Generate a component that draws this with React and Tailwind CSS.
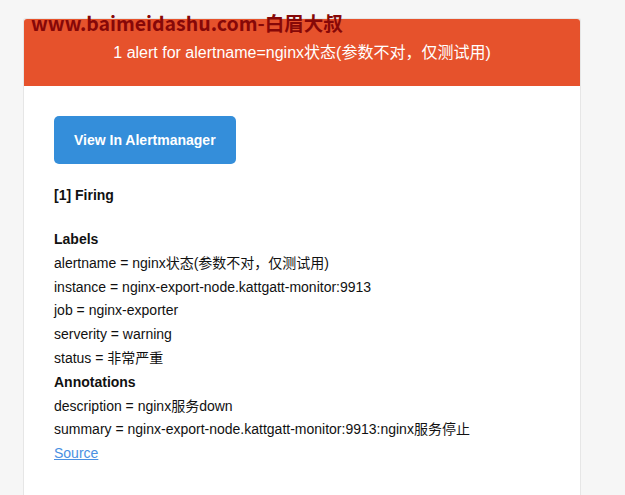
export default function App() {
  const labels = [
    "alertname = nginx状态(参数不对，仅测试用)",
    "instance = nginx-export-node.kattgatt-monitor:9913",
    "job = nginx-exporter",
    "serverity = warning",
    "status = 非常严重",
  ];
  const annotations = [
    "description = nginx服务down",
    "summary = nginx-export-node.kattgatt-monitor:9913:nginx服务停止",
  ];

  return (
    <div className="relative min-h-screen bg-[#f6f6f6] font-['Liberation_Sans','Noto_Sans_CJK_SC',sans-serif] text-[14px] text-[#111]">
      <div className="pt-[18px]">
        <div className="ml-[23px] min-h-[477px] w-[558px] rounded-t-[3px] border border-b-0 border-[#e6e6e6] bg-white">
          <div className="rounded-t-[3px] bg-[#e6522c] py-[20px] text-center text-[16px] leading-[27px] text-white">
            1 alert for alertname=nginx状态(参数不对，仅测试用)
          </div>
          <div className="px-[30px] pt-[30px] pb-[28px]">
            <a className="inline-block rounded-[5px] bg-[#348eda] px-[20px] py-[10px] text-[14px] font-bold leading-[28px] text-white">
              View In Alertmanager
            </a>
            <div className="mt-[19px] font-bold leading-[24px]">[1] Firing</div>
            <div className="mt-[21px] leading-[23.8px]">
              <div className="font-bold">Labels</div>
              {labels.map((l) => (
                <div key={l}>{l}</div>
              ))}
              <div className="font-bold">Annotations</div>
              {annotations.map((a) => (
                <div key={a}>{a}</div>
              ))}
              <a className="text-[#4a90e2] underline">Source</a>
            </div>
          </div>
        </div>
      </div>
      {/* watermark */}
      <div className="absolute left-[31px] top-[11px] font-['Noto_Sans_CJK_SC',sans-serif] text-[19.5px] font-bold leading-[24px] text-[#860808]">
        www.baimeidashu.com-白眉大叔
      </div>
    </div>
  );
}
